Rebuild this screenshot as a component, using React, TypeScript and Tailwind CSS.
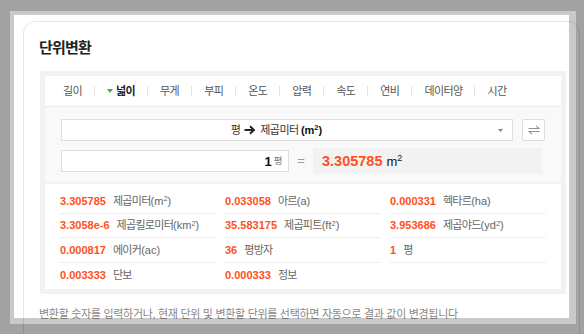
import React from "react";

const tabs = ["길이", "넓이", "무게", "부피", "온도", "압력", "속도", "연비", "데이터양", "시간"];

type Item = { v: string; l: React.ReactNode } | null;

const Sq = ({ u }: { u: string }) => (
  <span className="tracking-normal">
    ({u}
    <sup className="text-[7.5px] top-[-0.45em]">2</sup>)
  </span>
);

const rows: Item[][] = [
  [
    { v: "3.305785", l: <>제곱미터<Sq u="m" /></> },
    { v: "0.033058", l: <>아르<span className="tracking-normal">(a)</span></> },
    { v: "0.000331", l: <>헥타르<span className="tracking-normal">(ha)</span></> },
  ],
  [
    { v: "3.3058e-6", l: <>제곱킬로미터<Sq u="km" /></> },
    { v: "35.583175", l: <>제곱피트<Sq u="ft" /></> },
    { v: "3.953686", l: <>제곱야드<Sq u="yd" /></> },
  ],
  [
    { v: "0.000817", l: <>에이커<span className="tracking-normal">(ac)</span></> },
    { v: "36", l: "평방자" },
    { v: "1", l: "평" },
  ],
  [
    { v: "0.003333", l: "단보" },
    { v: "0.000333", l: "정보" },
    null,
  ],
];

export default function App() {
  return (
    <div
      className="relative w-[584px] h-[334px] overflow-hidden bg-white text-[#222]"
      style={{ fontFamily: '"Liberation Sans", "Noto Sans CJK KR", sans-serif' }}
    >
      <div className="pl-[23px] pt-[21px]">
        <div className="w-[557px] h-[340px] rounded-t-[12px] border border-[#e6e6e6] pl-[15px] pt-[16px]">
          <h2 className="text-[15px] font-bold leading-[20px] tracking-[-0.8px] text-[#222] mb-[13px]">단위변환</h2>
          <div className="ml-[1px] w-[526px] bg-[#f2f2f2] p-[5px]">
            {/* tabs */}
            <div className="h-[31px] bg-white flex items-center pl-[6px] border-b border-[#ececec]">
              {tabs.map((t, i) => (
                <React.Fragment key={t}>
                  {i > 0 && <span className="w-px h-[10px] bg-[#e4e4e4]" />}
                  <span
                    className={
                      "px-[12px] flex items-center text-[11px] leading-[14px] tracking-[-0.6px] " +
                      (i === 1 ? "font-bold text-[#222]" : "text-[#555]")
                    }
                  >
                    {i === 1 && (
                      <svg width="6" height="4" viewBox="0 0 6 4" className="mr-[3px]">
                        <path d="M0 0 H6 L3 4 Z" fill="#3fae3f" />
                      </svg>
                    )}
                    {t}
                  </span>
                </React.Fragment>
              ))}
            </div>
            {/* inputs */}
            <div className="bg-[#f9f9f9] pt-[12px] pb-[8px] pl-[16px]">
              <div className="flex items-center gap-[9px]">
                <div className="relative w-[452px] h-[22px] bg-white border border-[#dedede] flex items-center justify-center pr-[21px] text-[11px]">
                  <span className="text-[#333] tracking-[-0.6px]">평</span>
                  <svg width="12" height="10" viewBox="0 0 12 10" className="mx-[4px]">
                    <path d="M0.5 5 H10 M6 1.3 L10 5 L6 8.7" fill="none" stroke="#222" strokeWidth="1.9" />
                  </svg>
                  <span className="text-[#333] tracking-[-0.6px]">
                    제곱미터 <span className="font-bold text-[#111] tracking-normal">(m<sup className="text-[7.5px] top-[-0.45em]">2</sup>)</span>
                  </span>
                  <svg width="5" height="3" viewBox="0 0 5 3" className="absolute right-[9px] top-[9px]">
                    <path d="M0 0 H5 L2.5 3 Z" fill="#3fae3f" />
                  </svg>
                </div>
                <div className="w-[23px] h-[22px] bg-white border border-[#dedede] rounded-[2px] flex items-center justify-center">
                  <svg width="12" height="10" viewBox="0 0 12 10">
                    <path d="M0.5 3.5 H11 L8 0.8" fill="none" stroke="#8c909a" strokeWidth="1.1" />
                    <path d="M11.5 6.5 H1 L4 9.2" fill="none" stroke="#8c909a" strokeWidth="1.1" />
                  </svg>
                </div>
              </div>
              <div className="flex items-center mt-[7px] h-[26px]">
                <div className="w-[228px] h-[22px] bg-white border border-[#dedede] flex items-center justify-end pr-[6px]">
                  <span className="text-[13px] font-bold text-[#111] leading-none">1</span>
                  <span className="ml-[2px] text-[9.5px] text-[#777] tracking-[-0.5px] leading-none">평</span>
                </div>
                <div className="w-[24px] flex justify-center text-[13px] text-[#999]">=</div>
                <div className="w-[229px] h-[26px] bg-[#f2f2f2] flex items-center pl-[9px]">
                  <span className="text-[14.5px] font-bold text-[#ff5022] leading-none">3.305785</span>
                  <span className="ml-[4px] text-[13px] text-[#111] leading-none">
                    m<sup className="text-[9px] top-[-0.5em]">2</sup>
                  </span>
                </div>
              </div>
            </div>
            {/* results */}
            <div className="mt-[2px] bg-white pl-[15px] pt-[5px] h-[105px]">
              <div className="grid grid-cols-3 w-[486px] gap-x-[9px]">
                {rows.map((r, ri) =>
                  r.map((it, ci) => (
                    <div
                      key={ri + "-" + ci}
                      className={
                        "h-[24.5px] flex items-center text-[11px] " +
                        (ri < 3 && it ? "border-b border-[#eeeeee]" : "")
                      }
                    >
                      {it && (
                        <>
                          <span className="font-bold text-[#ff5022]">{it.v}</span>
                          <span className="ml-[7px] text-[#666] tracking-[-0.7px]">{it.l}</span>
                        </>
                      )}
                    </div>
                  ))
                )}
              </div>
            </div>
          </div>
          <p className="mt-[13px] text-[11px] leading-[14px] text-[#888] tracking-[-0.3px]">
            변환할 숫자를 입력하거나, 현재 단위 및 변환할 단위를 선택하면 자동으로 결과 값이 변경됩니다
          </p>
        </div>
      </div>
      {/* overlay */}
      <div className="absolute left-[10px] top-[11px] w-[566px] h-[313px] border-l-[4px] border-t-[4px] border-r-[7px] border-b-[6px] border-[rgba(0,0,0,0.21)] shadow-[0_0_0_9999px_rgba(0,0,0,0.365)] pointer-events-none" />
    </div>
  );
}
